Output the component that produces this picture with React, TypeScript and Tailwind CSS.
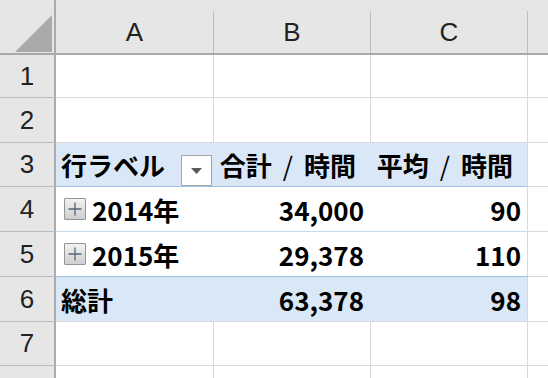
import React from "react";

const hdrFont = { fontFamily: '"Liberation Sans", Arial, sans-serif' };
const jpFont = { fontFamily: '"Noto Sans CJK JP", "Noto Sans", sans-serif' };

function RowHead({ n }: { n: number }) {
  return (
    <div
      className="w-[56px] shrink-0 flex items-center justify-center border-r-2 border-r-[#ababab] border-b border-b-[#bcbcbc] bg-[#e6e6e6] text-[26px] text-[#222]"
      style={hdrFont}
    >
      {n}
    </div>
  );
}

function PlainRow({ n, h }: { n: number; h: string }) {
  return (
    <div className={`flex ${h}`}>
      <RowHead n={n} />
      <div className="w-[158px] shrink-0 border-r border-b border-[#d9d9d9] bg-white" />
      <div className="w-[157px] shrink-0 border-r border-b border-[#d9d9d9] bg-white" />
      <div className="w-[157px] shrink-0 border-r border-b border-[#d9d9d9] bg-white" />
      <div className="flex-1 border-b border-[#d9d9d9] bg-white" />
    </div>
  );
}

function ExpandBox() {
  return (
    <div className="w-[22px] h-[22px] shrink-0 border border-[#959595] rounded-[1px] bg-gradient-to-b from-[#f2f2f2] to-[#cfcfcf] flex items-center justify-center">
      <svg width="16" height="16" viewBox="0 0 16 16">
        <path d="M8 1.5V14.5M1.5 8H14.5" stroke="#56667a" strokeWidth="1.3" />
      </svg>
    </div>
  );
}

function Slashed({ a, b }: { a: string; b: string }) {
  return (
    <span className="whitespace-nowrap flex items-center">
      <span>{a}</span>
      <span className="mx-[11px] font-normal">/</span>
      <span>{b}</span>
    </span>
  );
}

export default function App() {
  return (
    <div className="w-[548px] h-[378px] overflow-hidden bg-white select-none">
      {/* column header */}
      <div className="flex h-[55px] bg-[#e6e6e6] border-b-2 border-[#a9a9a9]">
        <div className="w-[56px] shrink-0 border-r-2 border-r-[#ababab] relative">
          <svg className="absolute left-[15px] top-[15px]" width="38" height="38" viewBox="0 0 38 38">
            <polygon points="37,0 37,37 0,37" fill="#aaaaaa" />
          </svg>
        </div>
        {[
          ["A", "w-[158px]"],
          ["B", "w-[157px]"],
          ["C", "w-[157px]"],
        ].map(([l, w]) => (
          <div key={l} className={`${w} shrink-0 flex flex-col`}>
            <div className="h-[11px]" />
            <div
              className="flex-1 border-r border-[#bdbdbd] flex items-center justify-center text-[26px] text-[#222]"
              style={hdrFont}
            >
              {l}
            </div>
          </div>
        ))}
        <div className="flex-1" />
      </div>

      <PlainRow n={1} h="h-[43px]" />
      <PlainRow n={2} h="h-[45px]" />

      {/* row 3: pivot header */}
      <div className="flex h-[44px]">
        <RowHead n={3} />
        <div
          className="w-[472px] shrink-0 border-r border-r-[#d9d9d9] border-b border-b-[#9dc3e6] bg-[#d9e7f6] grid grid-cols-[157px_157px_157px] font-bold text-[26px] text-black"
          style={jpFont}
        >
          <div className="relative flex items-center pl-[5px]">
            <span>行ラベル</span>
            <div className="absolute left-[125px] bottom-0 w-[31px] h-[31px] bg-white border border-[#a6a6a6] flex items-center justify-center">
              <svg width="11" height="6" viewBox="0 0 11 6">
                <polygon points="0,0 11,0 5.5,6" fill="#5a5a5a" />
              </svg>
            </div>
          </div>
          <div className="flex items-center justify-end pr-[14px]">
            <Slashed a="合計" b="時間" />
          </div>
          <div className="flex items-center justify-end pr-[14px]">
            <Slashed a="平均" b="時間" />
          </div>
        </div>
        <div className="flex-1 border-b border-[#d9d9d9]" />
      </div>

      {/* row 4 */}
      <div className="flex h-[45px]">
        <RowHead n={4} />
        <div
          className="w-[472px] shrink-0 border-r border-r-[#d9d9d9] border-b border-b-[#c5dbf0] bg-white grid grid-cols-[157px_157px_157px] font-bold text-[26px] text-black"
          style={jpFont}
        >
          <div className="flex items-center pl-[8px] gap-[6px]">
            <ExpandBox />
            <span>2014年</span>
          </div>
          <div className="flex items-center justify-end pr-[6px]">34,000</div>
          <div className="flex items-center justify-end pr-[6px]">90</div>
        </div>
        <div className="flex-1 border-b border-[#d9d9d9]" />
      </div>

      {/* row 5 */}
      <div className="flex h-[45px]">
        <RowHead n={5} />
        <div
          className="w-[472px] shrink-0 border-r border-r-[#d9d9d9] border-b border-b-[#9dc3e6] bg-white grid grid-cols-[157px_157px_157px] font-bold text-[26px] text-black"
          style={jpFont}
        >
          <div className="flex items-center pl-[8px] gap-[6px]">
            <ExpandBox />
            <span>2015年</span>
          </div>
          <div className="flex items-center justify-end pr-[6px]">29,378</div>
          <div className="flex items-center justify-end pr-[6px]">110</div>
        </div>
        <div className="flex-1 border-b border-[#d9d9d9]" />
      </div>

      {/* row 6 */}
      <div className="flex h-[45px]">
        <RowHead n={6} />
        <div
          className="w-[472px] shrink-0 border-r border-r-[#d9d9d9] border-b border-b-[#d9d9d9] bg-[#d9e7f6] grid grid-cols-[157px_157px_157px] font-bold text-[26px] text-black"
          style={jpFont}
        >
          <div className="flex items-center pl-[5px]">総計</div>
          <div className="flex items-center justify-end pr-[6px]">63,378</div>
          <div className="flex items-center justify-end pr-[6px]">98</div>
        </div>
        <div className="flex-1 border-b border-[#d9d9d9]" />
      </div>

      <PlainRow n={7} h="h-[44px]" />
      <PlainRow n={8} h="h-[44px]" />
    </div>
  );
}
